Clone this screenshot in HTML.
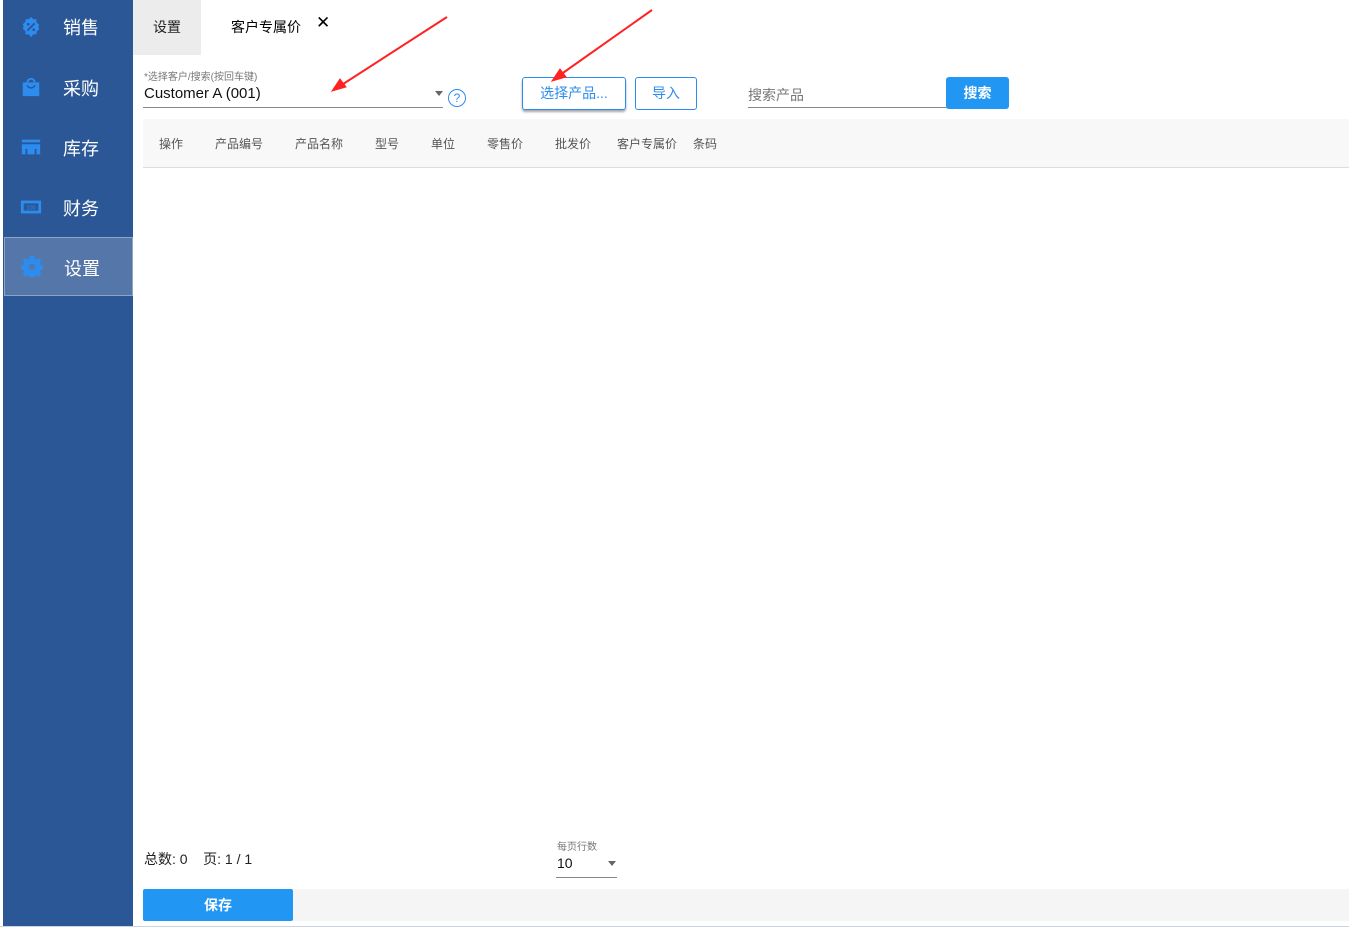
<!DOCTYPE html>
<html><head><meta charset="utf-8"><style>
body{margin:0;width:1349px;height:929px;position:relative;overflow:hidden;background:#fff;font-family:"Liberation Sans","Noto Sans CJK SC",sans-serif;}
.a{position:absolute}
.side{left:3px;top:0;width:130px;height:926px;background:#2b5796}
.it{position:absolute;left:0;width:130px;height:60px;color:#fff;font-size:18px}
.it span{position:absolute;left:60px;top:15px}
.it svg{position:absolute;left:17px;top:16px}
.th{position:absolute;top:135px;font-size:12px;color:#555}
</style></head><body>
<div class="a side">
 <div class="it" style="top:0"><svg width="22" height="22" viewBox="0 0 24 24"><path fill="#2d8cf0" d="M12 1l2.5 2.5H18v3.5L21 9.5l-1 2.5 1 2.5-3 2.5V20h-3.5L12 23l-2.5-3H6v-3.5L3 14l1-2.5-1-2.5 3-2.5V3.5h3.5z"/><path stroke="#2b5796" stroke-width="2" d="M8 16L16 8"/><circle cx="9" cy="9" r="1.5" fill="#2b5796"/><circle cx="15" cy="15" r="1.5" fill="#2b5796"/></svg><span style="top:14px">销售</span></div>
 <div class="it" style="top:60px"><svg width="22" height="22" viewBox="0 0 24 24"><path fill="#2d8cf0" d="M3 7h18v15H3z"/><path fill="none" stroke="#2d8cf0" stroke-width="2" d="M8 7a4 4 0 018 0"/><path fill="none" stroke="#2b5796" stroke-width="1.5" d="M8 10a4 3 0 008 0"/></svg><span>采购</span></div>
 <div class="it" style="top:120px"><svg width="22" height="22" viewBox="0 0 24 24"><path fill="#2d8cf0" d="M2 4h20v3H2zM2 9h20v11h-4v-6H6v6H2zM8 14h8v6H8z"/></svg><span>库存</span></div>
 <div class="it" style="top:180px"><svg width="22" height="22" viewBox="0 0 24 24"><rect x="1" y="5" width="22" height="14" fill="#2d8cf0"/><rect x="4" y="8" width="16" height="8" fill="#2b5796"/><text x="12" y="14.5" font-size="6" fill="#2d8cf0" text-anchor="middle">100</text></svg><span>财务</span></div>
 <div class="it" style="top:237px;left:1px;width:127px;height:57px;background:#5476a8;border:1px solid #8ea3c6"><svg width="22" height="22" viewBox="0 0 24 24" style="left:16px;top:17px"><path fill="#2d8cf0" d="M10 1h4l.6 3 2.3 1 2.6-1.7 2.8 2.8-1.7 2.6 1 2.3 3 .6v4l-3 .6-1 2.3 1.7 2.6-2.8 2.8-2.6-1.7-2.3 1-.6 3h-4l-.6-3-2.3-1-2.6 1.7-2.8-2.8 1.7-2.6-1-2.3-3-.6v-4l3-.6 1-2.3L1.7 6.1l2.8-2.8L7.1 5l2.3-1z"/><circle cx="12" cy="13" r="3.5" fill="#5476a8"/></svg><span style="left:59px;top:17px">设置</span></div>
</div>
<div class="a" style="left:133px;top:0;width:68px;height:55px;background:#ececec"></div>
<div class="a" style="left:153px;top:17px;font-size:14px;color:#222">设置</div>
<div class="a" style="left:231px;top:17px;font-size:14px;color:#000">客户专属价</div>
<div class="a" style="left:316px;top:13px;font-size:17px;color:#000">✕</div>
<div class="a" style="left:144px;top:68px;font-size:10px;color:#777">*选择客户/搜索(按回车键)</div>
<div class="a" style="left:144px;top:85px;font-size:15px;color:#111">Customer A (001)</div>
<div class="a" style="left:143px;top:107px;width:300px;height:1px;background:#888"></div>
<div class="a" style="left:435px;top:91px;border:4px solid transparent;border-top:5px solid #666"></div>
<div class="a" style="left:448px;top:89px;width:16px;height:16px;border:1px solid #2d8cf0;border-radius:50%;color:#2d8cf0;font-size:12px;text-align:center;line-height:16px">?</div>
<div class="a" style="left:522px;top:77px;width:102px;height:31px;border:1px solid #2d8cf0;border-radius:3px;box-shadow:0 2px 2px rgba(0,0,0,.35);color:#2d8cf0;font-size:14px;text-align:center;line-height:31px">选择产品...</div>
<div class="a" style="left:635px;top:77px;width:60px;height:31px;border:1px solid #2d8cf0;border-radius:3px;color:#2d8cf0;font-size:14px;text-align:center;line-height:31px">导入</div>
<div class="a" style="left:748px;top:85px;font-size:14px;color:#777">搜索产品</div>
<div class="a" style="left:748px;top:107px;width:200px;height:1px;background:#888"></div>
<div class="a" style="left:946px;top:77px;width:63px;height:32px;background:#2196f3;border-radius:3px;color:#fff;font-weight:bold;font-size:14px;text-align:center;line-height:32px">搜索</div>
<div class="a" style="left:143px;top:119px;width:1206px;height:48px;background:#f8f8f8;border-bottom:1px solid #ddd"></div>
<div class="th" style="left:159px">操作</div><div class="th" style="left:215px">产品编号</div><div class="th" style="left:295px">产品名称</div><div class="th" style="left:375px">型号</div><div class="th" style="left:431px">单位</div><div class="th" style="left:487px">零售价</div><div class="th" style="left:555px">批发价</div><div class="th" style="left:617px">客户专属价</div><div class="th" style="left:693px">条码</div>
<div class="a" style="left:144px;top:849px;font-size:14px;color:#222">总数: 0 &nbsp;&nbsp; 页: 1 / 1</div>
<div class="a" style="left:557px;top:838px;font-size:10px;color:#777">每页行数</div>
<div class="a" style="left:557px;top:855px;font-size:14px;color:#111">10</div>
<div class="a" style="left:556px;top:877px;width:61px;height:1px;background:#888"></div>
<div class="a" style="left:608px;top:861px;border:4px solid transparent;border-top:5px solid #666"></div>
<div class="a" style="left:293px;top:889px;width:1056px;height:32px;background:#f5f5f5"></div>
<div class="a" style="left:143px;top:889px;width:150px;height:32px;background:#2196f3;border-radius:2px;color:#fff;font-weight:bold;font-size:14px;text-align:center;line-height:32px">保存</div>
<div class="a" style="left:0;top:926px;width:1349px;height:1px;background:#c8d4e4"></div>
<svg class="a" style="left:0;top:0" width="1349" height="120"><g stroke="#f22" fill="#f22"><line x1="447" y1="17" x2="340" y2="86" stroke-width="2"/><path d="M332 91l14-4-6-8z"/><line x1="652" y1="10" x2="560" y2="75" stroke-width="2"/><path d="M552 81l14-4-6-8z"/></g></svg>
</body></html>
